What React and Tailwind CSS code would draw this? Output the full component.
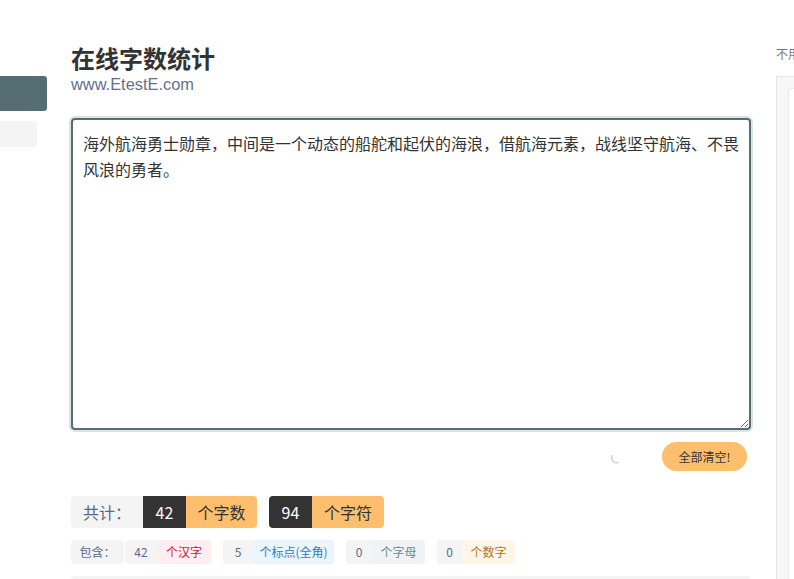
import React from "react";

const cjk = { fontFamily: '"Microsoft YaHei", "Noto Sans CJK SC", "Liberation Sans", sans-serif' };

export default function App() {
  const text =
    "海外航海勇士勋章，中间是一个动态的船舵和起伏的海浪，借航海元素，战线坚守航海、不畏风浪的勇者。";
  return (
    <div className="relative w-[794px] h-[579px] overflow-hidden bg-white" style={cjk}>
      <div className="flex">
        {/* left sidebar */}
        <div className="w-[71px] shrink-0 pt-[76px]">
          <div className="w-[47px] h-[35px] bg-[#546e73] rounded-r-[3px]" />
          <div className="w-[37px] h-[26px] bg-[#f4f4f4] rounded-r-[3px] mt-[10px]" />
        </div>

        {/* main */}
        <div className="w-[680px] shrink-0 pt-[43px]">
          <h1 className="text-[24px] leading-[30px] font-bold text-[#333]">在线字数统计</h1>
          <div className="text-[16.4px] leading-[20px] text-[#66708c] mt-[1px]" style={{ fontFamily: '"Liberation Sans", sans-serif' }}>
            www.EtestE.com
          </div>
          <textarea
            className="block mt-[24px] w-[680px] h-[312px] resize rounded-[4px] border-2 border-[#546e73] shadow-[0_0_0_2px_#dde2e3] px-[10px] py-[10px] outline-none text-[16px] leading-[26px] text-[#333] bg-white"
            style={cjk}
            defaultValue={text}
          />
          <div className="flex items-center justify-end mt-[12px] h-[29px]">
            <svg width="14" height="14" viewBox="0 0 14 14" className="mr-[38px] mt-[2px]">
              <path d="M2 5 A5 5 0 0 0 8 11.5" fill="none" stroke="#dcdcdc" strokeWidth="2" strokeLinecap="round" />
            </svg>
            <button className="h-[29px] w-[85px] mr-[4px] rounded-full bg-[#fdbf6e] text-[12px] text-[#333]">全部清空!</button>
          </div>
          <div className="flex mt-[25px] h-[32px] text-[16px]">
            <div className="flex items-center justify-center w-[72px] bg-[#f4f4f4] rounded-l-[4px] text-[#5b6888]">共计：</div>
            <div className="flex items-center justify-center w-[43px] bg-[#333] text-white">42</div>
            <div className="flex items-center justify-center w-[71px] bg-[#fdbf6e] rounded-r-[4px] text-[#333]">个字数</div>
            <div className="flex items-center justify-center w-[43px] ml-[12px] bg-[#333] rounded-l-[4px] text-white">94</div>
            <div className="flex items-center justify-center w-[72px] bg-[#fdbf6e] rounded-r-[4px] text-[#333]">个字符</div>
          </div>
          <div className="flex mt-[12px] h-[24px] text-[12px]">
            <div className="flex items-center justify-center w-[53px] bg-[#f4f4f4] rounded-[4px] text-[#5b6888]">包含：</div>
            <div className="flex ml-[1px] rounded-[4px] overflow-hidden">
              <div className="flex items-center justify-center w-[32px] bg-[#f4f4f4] text-[#5b6888]">42</div>
              <div className="flex items-center justify-center w-[54px] bg-[#ffeef1] text-[#d0123c]">个汉字</div>
            </div>
            <div className="flex ml-[12px] rounded-[4px] overflow-hidden">
              <div className="flex items-center justify-center w-[30px] bg-[#f4f4f4] text-[#5b6888]">5</div>
              <div className="flex items-center justify-center w-[81px] bg-[#ebf5fd] text-[#2f7db9]">个标点(全角)</div>
            </div>
            <div className="flex ml-[12px] rounded-[4px] overflow-hidden">
              <div className="flex items-center justify-center w-[26px] bg-[#f4f4f4] text-[#5b6888]">0</div>
              <div className="flex items-center justify-center w-[53px] bg-[#f0f3f5] text-[#6a8a96]">个字母</div>
            </div>
            <div className="flex ml-[12px] rounded-[4px] overflow-hidden">
              <div className="flex items-center justify-center w-[25px] bg-[#f4f4f4] text-[#5b6888]">0</div>
              <div className="flex items-center justify-center w-[53px] bg-[#fff5e8] text-[#b8770d]">个数字</div>
            </div>
          </div>
          <div className="mt-[12px] h-[20px] bg-[#f4f4f4] rounded-t-[4px]" />
        </div>

        {/* right */}
        <div className="ml-[25px] pt-[47px] shrink-0">
          <div className="text-[12px] leading-[14px] text-[#777] whitespace-nowrap">不用担心</div>
          <div className="mt-[15px] w-[60px] h-[520px] bg-[#f7f7f7] border border-[#e6e6e6] pl-[11px] pt-[11px]">
            <div className="w-full h-full bg-white border border-[#eaeaea] rounded-[3px]" />
          </div>
        </div>
      </div>
    </div>
  );
}
